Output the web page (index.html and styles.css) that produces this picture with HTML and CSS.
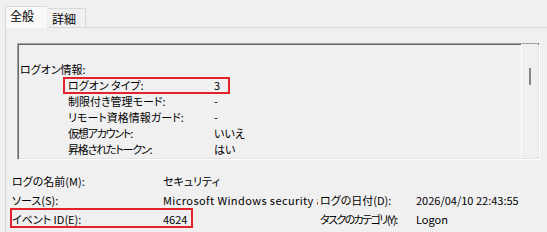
FILE: index.html
```html
<!DOCTYPE html>
<html lang="ja">
<head>
<meta charset="utf-8">
<title>イベント プロパティ</title>
<link rel="stylesheet" href="styles.css">
</head>
<body>
<div class="tabs">
  <div class="tab active">全般</div>
  <div class="tab">詳細</div>
</div>
<div class="panel">
  <div class="desc">
    <div class="desc-body">
      <div class="line">ログオン情報:</div>
      <div class="kv marked"><span class="k">ログオン タイプ:</span><span class="v">3</span><span class="hl hl-row"></span></div>
      <div class="kv"><span class="k">制限付き管理モード:</span><span class="v">-</span></div>
      <div class="kv"><span class="k">リモート資格情報ガード:</span><span class="v">-</span></div>
      <div class="kv"><span class="k tight">仮想アカウント:</span><span class="v">いいえ</span></div>
      <div class="kv"><span class="k tight">昇格されたトークン:</span><span class="v">はい</span></div>
    </div>
    <div class="vscroll"><div class="thumb"></div></div>
  </div>
  <div class="fields">
    <div class="f-label">ログの名前(M):</div>
    <div class="f-value">セキュリティ</div>
    <div class="f-label2"></div>
    <div class="f-value2"></div>

    <div class="f-label">ソース(S):</div>
    <div class="f-value"><div class="clip">Microsoft Windows security auditing.</div></div>
    <div class="f-label2">ログの日付(D):</div>
    <div class="f-value2">2026/04/10 22:43:55</div>

    <div class="f-label marked">イベント ID(E):<span class="hl hl-field"></span></div>
    <div class="f-value">4624</div>
    <div class="f-label2 tighter">タスクのカテゴリ(Y):</div>
    <div class="f-value2">Logon</div>
  </div>
</div>
</body>
</html>
```

FILE: styles.css
```css
html, body {
  margin: 0;
  padding: 0;
}
body {
  width: 547px;
  height: 232px;
  overflow: hidden;
  background: #f0f0f0;
  color: #000;
  font-family: "Noto Sans CJK JP", sans-serif;
  font-size: 11px;
  line-height: 16px;
  font-feature-settings: "palt";
}

/* tabs */
.tabs {
  display: flex;
  align-items: flex-end;
  height: 27px;
  padding-left: 5px;
  font-size: 12px;
}
.tab {
  box-sizing: border-box;
  height: 19px;
  width: 39px;
  padding-left: 5px;
  line-height: 19px;
  border: 1px solid #d9d9d9;
  border-bottom: none;
  border-left: none;
  background: #f0f0f0;
}
.tab.active {
  position: relative;
  z-index: 1;
  height: 22px;
  width: 42px;
  padding-left: 4px;
  line-height: 18px;
  margin-bottom: -1px;
  border-left: 1px solid #d9d9d9;
  border-right: none;
  background: #f9f9f9;
}

/* panel */
.panel {
  margin-left: 5px;
  margin-right: -20px;
  height: 204px;
  border-left: 1px solid #d9d9d9;
  border-top: 1px solid #d9d9d9;
}

/* description box */
.desc {
  box-sizing: border-box;
  display: flex;
  width: 523px;
  height: 117px;
  margin: 15px 0 0 11px;
  border-top: 1px solid #a0a0a0;
  border-left: 1px solid #a0a0a0;
  border-right: 1px solid #ffffff;
  border-bottom: 1px solid #ffffff;
  box-shadow: inset 1px 1px 0 #696969, inset -1px -1px 0 #e3e3e3;
  overflow: hidden;
}
.desc-body {
  flex: 1;
  padding: 17px 0 0 2px;
}
.kv {
  display: flex;
  padding-left: 48px;
}
.k {
  width: 146px;
  white-space: nowrap;
}
.v {
  white-space: nowrap;
}
.tight {
  letter-spacing: -1.2px;
}
.tighter {
  letter-spacing: -1.6px;
}
.marked {
  position: relative;
}
.hl {
  position: absolute;
  box-sizing: border-box;
  border: 2px solid #e3222b;
}
.hl-row {
  left: 43px;
  top: 0;
  width: 167px;
  height: 17px;
}

/* scrollbar */
.vscroll {
  position: relative;
  width: 16px;
  margin-bottom: 1px;
  margin-right: 1px;
  border-left: 1px solid #ffffff;
  background: #f0f0f0;
}
.thumb {
  position: absolute;
  left: 7px;
  top: 24px;
  width: 2px;
  height: 17px;
  background: #858585;
}

/* fields */
.fields {
  display: grid;
  grid-template-columns: 151px 157px 96px 1fr;
  grid-auto-rows: 19px;
  margin-top: 12px;
  padding-left: 6px;
  line-height: 19px;
}
.f-label, .f-value, .f-label2, .f-value2 {
  white-space: nowrap;
}
.clip {
  width: 155px;
  overflow: hidden;
  letter-spacing: 0.4px;
}
.hl-field {
  left: -2px;
  top: -2px;
  width: 183px;
  height: 20px;
}
```
